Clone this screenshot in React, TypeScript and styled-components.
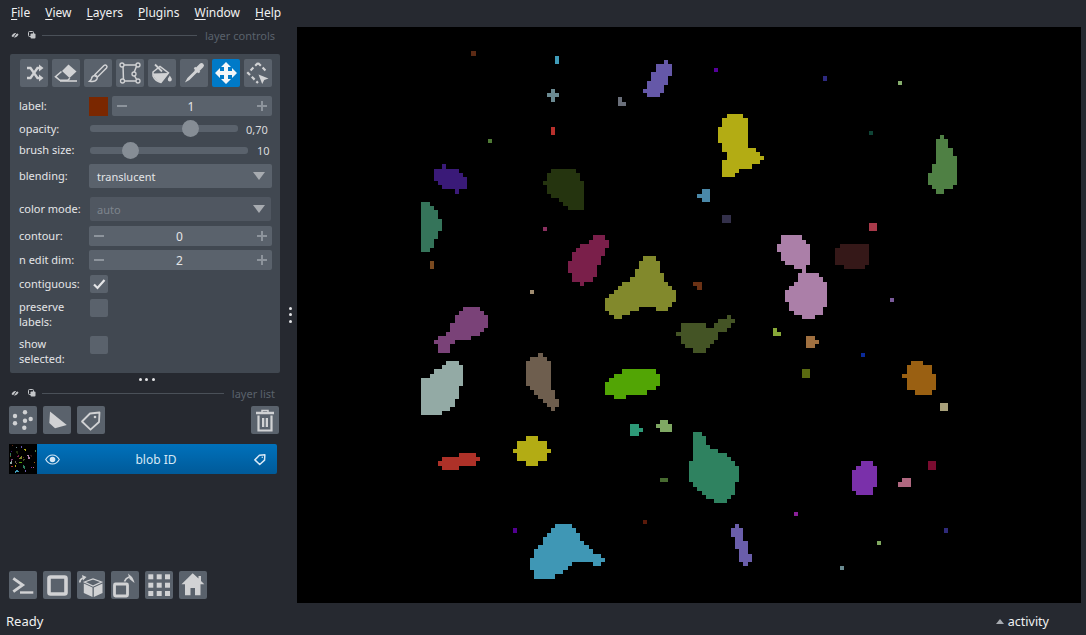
import * as React from "react";
import styled, { createGlobalStyle } from "styled-components";

const BG = "#262930";
const PANEL = "#414851";
const BTN = "#5a626c";
const ICON = "#d1d2d4";
const TEXT = "#f0f1f2";

type Blob = { color: string; at: [number, number]; rows: number[][] };

// rows are read off 3x crops: [top, x0, x1, (x0, x1)...], last row is only the bottom edge
const Z6: [number, number] = [410, 40];
const Z7: [number, number] = [640, 40];
const Z8: [number, number] = [410, 220];
const Z9: [number, number] = [410, 400];
const Z10: [number, number] = [680, 220];
const Z11: [number, number] = [680, 400];

const box = (color: string, at: [number, number], x0: number, x1: number, y0: number, y1: number): Blob => ({
  color,
  at,
  rows: [[y0, x0, x1], [y1]],
});

const BLOBS: Blob[] = [
  box("#5c2a14", Z6, 183, 198, 33, 48),
  box("#3f9bb8", Z6, 435, 447, 48, 72),
  { color: "#6b8a92", at: Z6, rows: [[147, 423, 435], [159, 411, 447], [171, 423, 435], [186]] },
  { color: "#6a6f7a", at: Z6, rows: [[171, 624, 636], [186, 624, 648], [198]] },
  box("#b8302c", Z6, 423, 435, 261, 285),
  box("#4f7a35", Z6, 234, 246, 297, 309),
  {
    color: "#3a1a78",
    at: Z6,
    rows: [[372, 96, 108], [387, 72, 147], [399, 72, 159], [411, 72, 171], [423, 84, 171], [435, 96, 171], [447, 135, 147], [461]],
  },
  {
    color: "#25340f",
    at: Z6,
    rows: [[387, 423, 498], [399, 411, 510], [423, 399, 522], [435, 411, 522], [461, 423, 522], [474, 447, 522], [486, 459, 522], [498, 474, 522], [510]],
  },
  {
    color: "#35745a",
    at: Z6,
    rows: [[486, 33, 60], [498, 33, 72], [510, 33, 84], [537, 33, 96], [573, 33, 84], [597, 33, 72], [624, 33, 60], [636]],
  },
  {
    color: "#6558a8",
    at: Z7,
    rows: [[60, 72, 84], [72, 48, 96], [96, 33, 96], [108, 33, 84], [123, 21, 84], [135, 21, 72], [147, 9, 72], [159, 21, 60], [171]],
  },
  box("#55009a", Z7, 222, 234, 84, 96),
  box("#2e2a80", Z7, 549, 561, 108, 123),
  box("#86ad6d", Z7, 774, 786, 123, 135),
  box("#0f4436", Z7, 687, 699, 273, 285),
  {
    color: "#b3ac14",
    at: Z7,
    rows: [[222, 261, 309], [234, 246, 324], [261, 234, 324], [309, 246, 324], [324, 246, 348], [336, 261, 360], [348, 261, 372], [360, 246, 360], [372, 246, 336], [387, 246, 297], [399, 246, 285], [411]],
  },
  { color: "#4a88a8", at: Z7, rows: [[447, 186, 210], [462, 171, 210], [474, 186, 210], [486]] },
  box("#33304a", Z7, 246, 273, 525, 549),
  box("#a83a4a", Z7, 687, 711, 549, 573),
  {
    color: "#4f8044",
    at: Z7,
    rows: [[285, 900, 912], [297, 888, 924], [324, 888, 939], [348, 888, 951], [372, 876, 951], [399, 864, 951], [435, 876, 939], [447, 888, 912], [462]],
  },
  box("#8a3060", Z8, 399, 411, 21, 33),
  box("#7a4a20", Z8, 60, 72, 123, 147),
  {
    color: "#7a1f4a",
    at: Z8,
    rows: [[45, 549, 585], [60, 537, 597], [72, 510, 597], [84, 498, 585], [96, 486, 585], [108, 486, 573], [123, 474, 573], [135, 474, 561], [159, 486, 561], [171, 486, 549], [186, 510, 522], [198]],
  },
  {
    color: "#82892c",
    at: Z8,
    rows: [[108, 699, 738], [123, 687, 750], [147, 675, 750], [159, 675, 762], [171, 660, 762], [186, 636, 774], [198, 624, 786], [210, 612, 798], [222, 597, 798], [234, 585, 798], [246, 585, 786], [261, 585, 687, 738, 774], [273, 597, 660], [285, 612, 636], [297]],
  },
  box("#a08c70", Z8, 360, 372, 210, 222),
  { color: "#6b3215", at: Z8, rows: [[186, 849, 876], [198, 861, 876], [210]] },
  {
    color: "#445425",
    at: Z8,
    rows: [[285, 951, 963], [297, 924, 975], [309, 813, 888, 912, 963], [324, 813, 951], [336, 798, 924], [348, 813, 924], [360, 813, 912], [372, 825, 900], [384, 849, 888], [399]],
  },
  {
    color: "#7a4278",
    at: Z8,
    rows: [[261, 159, 210], [273, 147, 222], [285, 135, 234], [309, 120, 234], [324, 120, 222], [336, 108, 210], [348, 84, 183], [360, 72, 135], [372, 84, 120], [399]],
  },
  {
    color: "#93aaa5",
    at: Z8,
    rows: [[423, 108, 147], [435, 96, 159], [447, 72, 159], [462, 60, 159], [474, 33, 159], [498, 33, 147], [537, 33, 135], [561, 33, 120], [573, 33, 96], [585]],
  },
  {
    color: "#6e5e4e",
    at: Z8,
    rows: [[399, 384, 399], [411, 360, 411], [423, 348, 423], [498, 360, 423], [510, 372, 435], [525, 384, 435], [537, 399, 447], [549, 411, 447], [561, 423, 435], [573]],
  },
  {
    color: "#52a505",
    at: Z8,
    rows: [[447, 636, 738], [462, 612, 750], [474, 597, 750], [486, 585, 750], [498, 585, 738], [510, 585, 711], [525, 612, 648], [537]],
  },
  { color: "#2e9a78", at: Z9, rows: [[72, 660, 687], [84, 660, 699], [96, 660, 687], [108]] },
  { color: "#7fa863", at: Z9, rows: [[60, 750, 774], [72, 738, 786], [84, 750, 786], [96]] },
  { color: "#b3ac14", at: Z9, rows: [[108, 348, 384], [123, 321, 411], [147, 309, 423], [159, 321, 411], [183, 348, 384], [198]] },
  { color: "#ae3128", at: Z9, rows: [[159, 147, 198], [171, 96, 210], [183, 84, 198], [198, 96, 147], [210]] },
  {
    color: "#2f8260",
    at: Z9,
    rows: [[96, 849, 876], [108, 849, 888], [135, 849, 900], [147, 849, 924], [159, 849, 951], [171, 849, 963], [183, 837, 975], [198, 837, 987], [246, 849, 975], [261, 861, 975], [273, 876, 975], [285, 888, 963], [297, 912, 951], [309]],
  },
  box("#476a30", Z9, 750, 774, 234, 246),
  box("#5a1a0a", Z9, 699, 711, 360, 372),
  box("#520090", Z9, 309, 321, 384, 399),
  {
    color: "#3f97b5",
    at: Z9,
    rows: [[372, 435, 486], [384, 423, 498], [399, 411, 510], [411, 399, 510], [423, 399, 522], [435, 384, 537], [447, 372, 549], [462, 372, 573], [474, 360, 585], [486, 360, 486, 549, 573], [498, 360, 474], [510, 372, 459], [522, 372, 435], [537]],
  },
  {
    color: "#6a5eaa",
    at: Z9,
    rows: [[372, 975, 987], [384, 963, 999], [411, 975, 999], [423, 975, 1014], [447, 987, 1014], [462, 987, 1026], [486, 999, 1014], [498]],
  },
  {
    color: "#ab7fa8",
    at: Z10,
    rows: [[45, 303, 366], [60, 303, 378], [72, 291, 390], [96, 303, 390], [123, 315, 390], [135, 342, 378], [147, 366, 378], [159, 354, 417], [171, 354, 429], [186, 342, 441], [198, 327, 441], [210, 315, 441], [246, 327, 441], [261, 327, 429], [273, 342, 429], [285, 366, 405], [297]],
  },
  { color: "#351818", at: Z10, rows: [[72, 480, 567], [84, 465, 567], [135, 492, 555], [147]] },
  box("#7a5a9a", Z10, 630, 642, 234, 246),
  { color: "#88a838", at: Z10, rows: [[324, 279, 291], [336, 279, 303], [348]] },
  { color: "#a07040", at: Z10, rows: [[348, 378, 405], [360, 378, 417], [372, 378, 405], [384]] },
  box("#0a2a9a", Z10, 543, 555, 399, 411),
  box("#5a6a10", Z10, 366, 390, 447, 474),
  { color: "#9a6012", at: Z10, rows: [[423, 693, 729], [435, 681, 756], [462, 666, 768], [474, 681, 768], [510, 705, 756], [525]] },
  box("#a8a07a", Z11, 780, 804, 9, 33),
  box("#7a0c30", Z11, 744, 768, 183, 210),
  { color: "#b06880", at: Z11, rows: [[234, 666, 693], [246, 654, 693], [261]] },
  { color: "#7a30aa", at: Z11, rows: [[183, 543, 579], [198, 528, 591], [210, 516, 591], [261, 516, 579], [273, 528, 579], [285]] },
  box("#8a2098", Z11, 342, 354, 336, 348),
  box("#2f2a7a", Z11, 792, 804, 384, 399),
  box("#80a860", Z11, 591, 603, 423, 435),
  box("#6a8a90", Z11, 480, 492, 498, 510),
];

function blobPath({ at, rows }: Blob) {
  let d = "";
  for (let i = 0; i < rows.length - 1; i++) {
    const top = at[1] + rows[i][0] / 3;
    const bottom = at[1] + rows[i + 1][0] / 3;
    for (let k = 1; k < rows[i].length; k += 2) {
      const x0 = at[0] + rows[i][k] / 3;
      const x1 = at[0] + rows[i][k + 1] / 3;
      d += `M${x0} ${top}H${x1}V${bottom}H${x0}Z`;
    }
  }
  return d;
}

const GlobalStyle = createGlobalStyle`
  html, body {
    margin: 0;
    background: ${BG};
  }
  body {
    font-family: "Noto Sans", "DejaVu Sans", sans-serif;
    color: ${TEXT};
  }
`;

const Window = styled.div`
  width: 1086px;
  height: 635px;
  display: flex;
  flex-direction: column;
  background: ${BG};
  overflow: hidden;
`;

const MenuBar = styled.div`
  height: 27px;
  flex: none;
  display: flex;
  align-items: center;
  padding: 0 0 3px 11px;
  box-sizing: border-box;
  gap: 15px;
  font-size: 12px;
`;

const MenuItem = styled.span`
  color: ${TEXT};
  u {
    text-underline-offset: 2px;
  }
`;

const Body = styled.div`
  flex: 1;
  display: flex;
  min-height: 0;
`;

const Dock = styled.div`
  width: 283px;
  flex: none;
  display: flex;
  flex-direction: column;
`;

const TitleRow = styled.div`
  height: 16px;
  display: flex;
  align-items: center;
  padding: 0 8px 0 11px;
  font-size: 11px;
  color: #5a626c;
`;

const TitleIcons = styled.div`
  display: flex;
  gap: 9px;
  margin-right: 6px;
`;

const TitleLine = styled.div`
  flex: 1;
  height: 1px;
  background: #4a5058;
  margin-right: 8px;
`;

const ControlPanel = styled.div`
  margin: 11px 3px 0 10px;
  height: 319px;
  box-sizing: border-box;
  padding: 5px 8px 0 9px;
  background: ${PANEL};
  border-radius: 2px;
  font-size: 11px;
`;

const ToolRow = styled.div`
  display: flex;
  gap: 4px;
  margin-left: 1px;
`;

const IconButton = styled.button<{ $active?: boolean }>`
  width: 28px;
  height: 28px;
  flex: none;
  padding: 0;
  border: 0;
  border-radius: 2px;
  display: block;
  background: ${(p) => (p.$active ? "#007ac8" : BTN)};
  color: ${(p) => (p.$active ? "#f4f6f8" : ICON)};
  svg {
    display: block;
  }
`;

const FormRow = styled.div<{ $h: number; $mt: number }>`
  display: grid;
  grid-template-columns: 70px 1fr;
  align-items: center;
  height: ${(p) => p.$h}px;
  margin-top: ${(p) => p.$mt}px;
`;

const Label = styled.div<{ $top?: boolean }>`
  color: #e4e5e7;
  line-height: 14.5px;
  align-self: ${(p) => (p.$top ? "start" : "center")};
  margin-top: ${(p) => (p.$top ? "1px" : "0")};
`;

const Field = styled.div`
  display: flex;
  align-items: center;
  min-width: 0;
`;

const Swatch = styled.div`
  width: 19px;
  height: 19px;
  flex: none;
  background: #7a2700;
  margin-right: 4px;
`;

const SpinBox = styled.div`
  flex: 1;
  height: 20px;
  display: flex;
  align-items: center;
  justify-content: space-between;
  padding: 0 5px;
  background: ${BTN};
  border-radius: 2px;
  font-size: 12px;
  color: #e4e5e7;
`;

const SpinValue = styled.span`
  margin-right: 2px;
`;

const SpinSign = styled.span`
  width: 10px;
  height: 10px;
  position: relative;
  flex: none;
  &::before {
    content: "";
    position: absolute;
    left: 0;
    right: 0;
    top: 4px;
    height: 2px;
    background: #8d949c;
  }
`;

const PlusSign = styled(SpinSign)`
  &::after {
    content: "";
    position: absolute;
    top: 0;
    bottom: 0;
    left: 4px;
    width: 2px;
    background: #8d949c;
  }
`;

const SliderWrap = styled.div`
  flex: 1;
  display: flex;
  align-items: center;
  padding-left: 1px;
`;

const Track = styled.div<{ $w: number; $lift?: number }>`
  width: ${(p) => p.$w}px;
  height: 7px;
  flex: none;
  position: relative;
  margin-top: ${(p) => -2 * (p.$lift ?? 0)}px;
  background: ${BTN};
  border-radius: 3px;
`;

const Thumb = styled.div`
  position: absolute;
  top: -5px;
  width: 17px;
  height: 17px;
  margin-left: -8px;
  border-radius: 50%;
  background: #868d95;
`;

const SliderValue = styled.span<{ $ml: number }>`
  margin-left: ${(p) => p.$ml}px;
  color: #d9dadc;
`;

const Combo = styled.div<{ $disabled?: boolean }>`
  flex: 1;
  height: 24px;
  margin: 0 ${(p) => (p.$disabled ? "1px" : "0")};
  display: flex;
  align-items: center;
  justify-content: space-between;
  padding: 0 ${(p) => (p.$disabled ? "6px 0 7px" : "7px 0 8px")};
  background: ${(p) => (p.$disabled ? "#505761" : BTN)};
  border-radius: 2px;
  font-size: 11px;
  color: ${(p) => (p.$disabled ? "#7e858d" : "#e4e5e7")};
`;

const ComboArrow = styled.span`
  width: 0;
  height: 0;
  border-left: 6.5px solid transparent;
  border-right: 6.5px solid transparent;
  border-top: 8px solid #a7abb0;
`;

const Check = styled.div`
  width: 18px;
  height: 18px;
  margin-left: 1px;
  background: ${BTN};
  border-radius: 2px;
  align-self: start;
  svg {
    display: block;
  }
`;

const HandleRow = styled.div`
  height: 12px;
  width: 273px;
  margin-left: 10px;
  display: flex;
  align-items: center;
  justify-content: center;
  gap: 3.5px;
`;

const Dot = styled.span`
  width: 3px;
  height: 3px;
  border-radius: 50%;
  background: #e4e5e7;
`;

const LayerTools = styled.div`
  display: flex;
  gap: 6px;
  margin: 5px 4px 0 9px;
`;

const Spacer = styled.div`
  flex: 1;
`;

const LayerRow = styled.div`
  margin: 10px 6px 0 9px;
  height: 30px;
  display: flex;
`;

const Thumbnail = styled.div`
  width: 28px;
  flex: none;
  background: #000;
  svg {
    display: block;
  }
`;

const LayerBody = styled.div`
  flex: 1;
  display: flex;
  align-items: center;
  padding: 0 9px 0 8px;
  background: linear-gradient(#0071bb, #005a99);
  border-radius: 0 2px 2px 0;
  font-size: 12px;
  color: #d7e8f5;
`;

const LayerName = styled.span`
  flex: 1;
  text-align: center;
`;

const BottomTools = styled.div`
  margin: auto 0 4px 9px;
  display: flex;
  gap: 6px;
`;

const Splitter = styled.div`
  width: 14px;
  flex: none;
  display: flex;
  flex-direction: column;
  align-items: center;
  justify-content: center;
  gap: 3.5px;
  padding-bottom: 1px;
`;

const Canvas = styled.div`
  width: 784px;
  height: 576px;
  flex: none;
  background: #000;
  svg {
    display: block;
  }
`;

const StatusBar = styled.div`
  height: 32px;
  flex: none;
  display: flex;
  align-items: center;
  justify-content: space-between;
  padding: 4px 37px 0 6px;
  box-sizing: border-box;
  font-size: 13px;
`;

const Activity = styled.div`
  display: flex;
  align-items: center;
  gap: 4px;
  font-size: 12.5px;
`;

const ActivityArrow = styled.span`
  width: 0;
  height: 0;
  border-left: 4px solid transparent;
  border-right: 4px solid transparent;
  border-bottom: 5px solid #a7abb0;
`;

const Ico: React.FC<{ children: React.ReactNode }> = ({ children }) => (
  <svg width="28" height="28" viewBox="0 0 28 28" fill="currentColor">
    {children}
  </svg>
);

const ShuffleIcon = () => (
  <Ico>
    <path d="M7 9h3.500l7 10H20M7 19h3.500l7-10H20" fill="none" stroke="currentColor" strokeWidth="2.400" />
    <path d="M19 5.500l4.500 3.500-4.500 3.500zM19 15.500l4.500 3.500-4.500 3.500z" />
  </Ico>
);

const EraserIcon = () => (
  <Ico>
    <path d="M16.500 5.500l8 7-7 6.500-7.500-7z" />
    <path d="M9.500 12.500l-6 5.200 4.300 3.600h8l2-2" fill="none" stroke="currentColor" strokeWidth="1.600" />
    <path d="M8 22h17" stroke="currentColor" strokeWidth="1.600" />
  </Ico>
);

const BrushIcon = () => (
  <Ico>
    <path d="M20 6.500L11 15.500l2.500 2.500L22.500 9c1.500-1.800-.8-4-2.500-2.500z" fill="none" stroke="currentColor" strokeWidth="1.500" />
    <path d="M10.500 16.500c-2.500.3-2.800 2-3 3.200-.2 1-.8 1.800-1.800 2.500 3 .5 6.300-.2 7.300-2.200.5-1 .2-1.800-.2-2.200z" fill="none" stroke="currentColor" strokeWidth="1.500" />
  </Ico>
);

const PolygonIcon = () => (
  <Ico>
    <path d="M7 6h14l-3.500 9 4 7H7.500z" fill="none" stroke="currentColor" strokeWidth="1.500" />
    <circle cx="6" cy="6" r="2" fill="#5a626c" stroke="currentColor" strokeWidth="1.300" />
    <circle cx="22" cy="6" r="2" fill="#5a626c" stroke="currentColor" strokeWidth="1.300" />
    <circle cx="18" cy="15" r="2" fill="#5a626c" stroke="currentColor" strokeWidth="1.300" />
    <circle cx="22" cy="22" r="2" fill="#5a626c" stroke="currentColor" strokeWidth="1.300" />
    <circle cx="6.500" cy="22" r="2" fill="#5a626c" stroke="currentColor" strokeWidth="1.300" />
  </Ico>
);

const BucketIcon = () => (
  <Ico>
    <path d="M7 5.500l7 7" stroke="currentColor" strokeWidth="1.800" />
    <path d="M5 13l7-5.500 8.500 6.500-7.500 9.500c-3-.6-6.500-3-8-6.500z" fill="none" stroke="currentColor" strokeWidth="1.500" />
    <path d="M4.800 14.500l15.700-.5-7.500 9.500c-3-.6-6.800-3.500-8.200-9z" />
    <path d="M21.800 16.500c1 1.800 2 2.800 2 4a2 2 0 0 1-4 0c0-1.200 1-2.200 2-4z" />
  </Ico>
);

const PipetteIcon = () => (
  <Ico>
    <path d="M17 11l4.500-4.500" stroke="currentColor" strokeWidth="4.800" strokeLinecap="round" />
    <path d="M14.500 8.500l5 5" stroke="currentColor" strokeWidth="2.200" />
    <path d="M16 11.500l-8 8-1.200 2.200 2.200-1.200 8-8" fill="none" stroke="currentColor" strokeWidth="1.500" />
  </Ico>
);

const MoveIcon = () => (
  <Ico>
    <path d="M14 3l5 5h-3v4h4V9l5 5-5 5v-3h-4v4h3l-5 5-5-5h3v-4H8v3l-5-5 5-5v3h4V8H9z" />
  </Ico>
);

const SelectIcon = () => (
  <Ico>
    <path d="M14 4l9 9M14 4L4 14l10 10" fill="none" stroke="currentColor" strokeWidth="2.200" strokeDasharray="4 2.500" />
    <path d="M14.500 15.500l10 4-4.300 1.500-2 4z" />
  </Ico>
);

const PointsIcon = () => (
  <Ico>
    <circle cx="16" cy="6.300" r="2.200" />
    <circle cx="6" cy="10" r="2.200" />
    <circle cx="21.700" cy="13" r="2.200" />
    <circle cx="16" cy="14.700" r="2.200" />
    <circle cx="6" cy="17.300" r="2.200" />
    <circle cx="15.300" cy="21.700" r="2.200" />
  </Ico>
);

const ShapesIcon = () => (
  <Ico>
    <path d="M7 5.500L23.800 19 12 22.200 6.300 17z" />
  </Ico>
);

const TagIcon: React.FC<{ size?: number }> = ({ size = 28 }) => (
  <svg width={size} height={size} viewBox="0 0 28 28">
    <path d="M13 7.500l9.500-1-.5 9.500-8.500 7.700L5 15.500z" fill="none" stroke="currentColor" strokeWidth={size < 28 ? 2.600 : 1.800} strokeLinejoin="round" />
    <circle cx="18" cy="11" r="1.300" fill="currentColor" />
  </svg>
);

const TrashIcon = () => (
  <Ico>
    <path d="M5 7h18" stroke="currentColor" strokeWidth="2.500" />
    <path d="M11 6V4.500h6V6" fill="none" stroke="currentColor" strokeWidth="1.500" />
    <path d="M7.500 9.500V24.500h13V9.500" fill="none" stroke="currentColor" strokeWidth="2.200" />
    <path d="M11 12h2.300v9H11zM14.700 12H17v9h-2.300z" />
  </Ico>
);

const ConsoleIcon = () => (
  <Ico>
    <path d="M4.300 7.300L13.700 14 4.300 20.700" fill="none" stroke="currentColor" strokeWidth="2.800" />
    <path d="M11 21.500h13.300" stroke="currentColor" strokeWidth="2.400" />
  </Ico>
);

const SquareIcon = () => (
  <Ico>
    <rect x="6" y="6" width="17" height="17" rx="1.500" fill="none" stroke="currentColor" strokeWidth="3.600" />
  </Ico>
);

const CubeIcon = () => (
  <Ico>
    <path d="M6.800 12.500l8.700 4v9.500l-8.700-4zM16.800 16.500l8.700-4v9.500l-8.700 4z" />
    <path d="M7.500 11l8.500-3 8.500 3-8.500 4z" fill="none" stroke="currentColor" strokeWidth="1.300" />
    <path d="M2.800 11.500c0-2 1-3.600 3-4.500" fill="none" stroke="currentColor" strokeWidth="1.600" />
    <path d="M5 4l4.500 2-3.500 3.500z" />
  </Ico>
);

const RotateIcon = () => (
  <Ico>
    <rect x="3.500" y="13" width="13" height="12" rx="1" fill="none" stroke="currentColor" strokeWidth="2.800" />
    <path d="M13.500 10.500c.8-2.300 2.600-3.800 4.500-4.500" fill="none" stroke="currentColor" strokeWidth="1.800" />
    <path d="M17 2.500l4 3.500c1 1.500 2 3.500 2.500 6l-5-4z" />
  </Ico>
);

const GridIcon = () => (
  <Ico>
    {[3.3, 11.7, 20].flatMap((y) =>
      [3.3, 11.7, 20].map((x) => <rect key={`${x}-${y}`} x={x} y={y} width="5" height="5" />)
    )}
  </Ico>
);

const HomeIcon = () => (
  <Ico>
    <path d="M13.700 2.300L19.500 7.500V5h2.500v5l3.300 3.200H21.500V24.300H16v-7.300h-4.500v7.300H6V13.200H2.500z" />
  </Ico>
);

const FloatIcon = () => (
  <svg width="8" height="8" viewBox="0 0 8 8">
    <path d="M.5 5C1.500 3 3 2 4.500 2S7 3 7.500 3.500C6.500 5.500 5 6.500 3.500 6.500S1 5.500.5 5z" fill="#c3c5c8" />
    <path d="M2 7L6.500 1" stroke="#262930" strokeWidth="1" />
  </svg>
);

const StackIcon = () => (
  <svg width="8" height="8" viewBox="0 0 8 8">
    <rect x=".5" y=".5" width="5" height="5" rx="1" fill="none" stroke="#c3c5c8" />
    <rect x="2.500" y="2.500" width="5" height="5" rx="1" fill="#c3c5c8" />
  </svg>
);

const EyeIcon = () => (
  <svg width="15" height="11" viewBox="0 0 15 11">
    <path d="M.7 5.500C2.500 2.300 5 1 7.500 1s5 1.300 6.800 4.500C12.500 8.700 10 10 7.500 10S2.500 8.700.7 5.500z" fill="none" stroke="currentColor" strokeWidth="1.100" />
    <circle cx="7.500" cy="5.500" r="2.800" fill="currentColor" />
  </svg>
);

const Blobs: React.FC<{ viewBox: string; width: number; height: number }> = ({ viewBox, width, height }) => (
  <svg width={width} height={height} viewBox={viewBox} preserveAspectRatio="none" shapeRendering="crispEdges">
    {BLOBS.map((b, i) => (
      <path key={i} d={blobPath(b)} fill={b.color} />
    ))}
  </svg>
);

const MENUS = ["File", "View", "Layers", "Plugins", "Window", "Help"];

const Spin: React.FC<{ value: number }> = ({ value }) => (
  <SpinBox>
    <SpinSign />
    <SpinValue>{value}</SpinValue>
    <PlusSign />
  </SpinBox>
);

export default function App() {
  return (
    <Window>
      <GlobalStyle />
      <MenuBar>
        {MENUS.map((m) => (
          <MenuItem key={m}>
            <u>{m[0]}</u>
            {m.slice(1)}
          </MenuItem>
        ))}
      </MenuBar>
      <Body>
        <Dock>
          <TitleRow>
            <TitleIcons>
              <FloatIcon />
              <StackIcon />
            </TitleIcons>
            <TitleLine />
            layer controls
          </TitleRow>
          <ControlPanel>
            <ToolRow>
              <IconButton><ShuffleIcon /></IconButton>
              <IconButton><EraserIcon /></IconButton>
              <IconButton><BrushIcon /></IconButton>
              <IconButton><PolygonIcon /></IconButton>
              <IconButton><BucketIcon /></IconButton>
              <IconButton><PipetteIcon /></IconButton>
              <IconButton $active><MoveIcon /></IconButton>
              <IconButton><SelectIcon /></IconButton>
            </ToolRow>
            <FormRow $h={20} $mt={9}>
              <Label>label:</Label>
              <Field>
                <Swatch />
                <Spin value={1} />
              </Field>
            </FormRow>
            <FormRow $h={21} $mt={3}>
              <Label>opacity:</Label>
              <SliderWrap>
                <Track $w={148} $lift={1}>
                  <Thumb style={{ left: "67.5%" }} />
                </Track>
                <SliderValue $ml={8}>0,70</SliderValue>
              </SliderWrap>
            </FormRow>
            <FormRow $h={21} $mt={0}>
              <Label>brush size:</Label>
              <SliderWrap>
                <Track $w={158}>
                  <Thumb style={{ left: "25.5%" }} />
                </Track>
                <SliderValue $ml={9}>10</SliderValue>
              </SliderWrap>
            </FormRow>
            <FormRow $h={24} $mt={3}>
              <Label>blending:</Label>
              <Combo>
                translucent
                <ComboArrow />
              </Combo>
            </FormRow>
            <FormRow $h={24} $mt={9}>
              <Label>color mode:</Label>
              <Combo $disabled>
                auto
                <ComboArrow />
              </Combo>
            </FormRow>
            <FormRow $h={20} $mt={5}>
              <Label>contour:</Label>
              <Spin value={0} />
            </FormRow>
            <FormRow $h={20} $mt={4}>
              <Label>n edit dim:</Label>
              <Spin value={2} />
            </FormRow>
            <FormRow $h={18} $mt={5}>
              <Label>contiguous:</Label>
              <Check>
                <svg width="18" height="18" viewBox="0 0 18 18">
                  <path d="M4 9.500l3.500 3.500 7-8" fill="none" stroke="#e4e5e7" strokeWidth="2.200" />
                </svg>
              </Check>
            </FormRow>
            <FormRow $h={30} $mt={6}>
              <Label $top>
                preserve
                <br />
                labels:
              </Label>
              <Check />
            </FormRow>
            <FormRow $h={30} $mt={7}>
              <Label $top>
                show
                <br />
                selected:
              </Label>
              <Check />
            </FormRow>
          </ControlPanel>
          <HandleRow>
            <Dot />
            <Dot />
            <Dot />
          </HandleRow>
          <TitleRow>
            <TitleIcons>
              <FloatIcon />
              <StackIcon />
            </TitleIcons>
            <TitleLine />
            layer list
          </TitleRow>
          <LayerTools>
            <IconButton><PointsIcon /></IconButton>
            <IconButton><ShapesIcon /></IconButton>
            <IconButton><TagIcon /></IconButton>
            <Spacer />
            <IconButton><TrashIcon /></IconButton>
          </LayerTools>
          <LayerRow>
            <Thumbnail>
              <Blobs viewBox="401 27 576 576" width={28} height={30} />
            </Thumbnail>
            <LayerBody>
              <EyeIcon />
              <LayerName>blob ID</LayerName>
              <TagIcon size={16} />
            </LayerBody>
          </LayerRow>
          <BottomTools>
            <IconButton><ConsoleIcon /></IconButton>
            <IconButton><SquareIcon /></IconButton>
            <IconButton><CubeIcon /></IconButton>
            <IconButton><RotateIcon /></IconButton>
            <IconButton><GridIcon /></IconButton>
            <IconButton><HomeIcon /></IconButton>
          </BottomTools>
        </Dock>
        <Splitter>
          <Dot />
          <Dot />
          <Dot />
        </Splitter>
        <Canvas>
          <Blobs viewBox="297 27 784 576" width={784} height={576} />
        </Canvas>
      </Body>
      <StatusBar>
        <span>Ready</span>
        <Activity>
          <ActivityArrow />
          activity
        </Activity>
      </StatusBar>
    </Window>
  );
}
